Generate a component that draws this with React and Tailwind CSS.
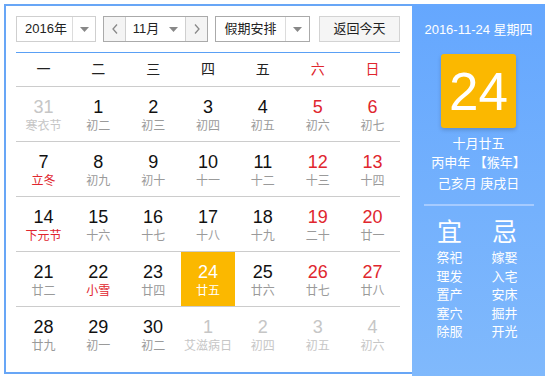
const weekdays = [
  { t: "一" },
  { t: "二" },
  { t: "三" },
  { t: "四" },
  { t: "五" },
  { t: "六", red: true },
  { t: "日", red: true },
];

// d: day, l: lunar text, o: other month, h: holiday (red lunar), w: weekend, today
const weeks = [
  [
    { d: 31, l: "寒衣节", o: true },
    { d: 1, l: "初二" },
    { d: 2, l: "初三" },
    { d: 3, l: "初四" },
    { d: 4, l: "初五" },
    { d: 5, l: "初六", w: true },
    { d: 6, l: "初七", w: true },
  ],
  [
    { d: 7, l: "立冬", h: true },
    { d: 8, l: "初九" },
    { d: 9, l: "初十" },
    { d: 10, l: "十一" },
    { d: 11, l: "十二" },
    { d: 12, l: "十三", w: true },
    { d: 13, l: "十四", w: true },
  ],
  [
    { d: 14, l: "下元节", h: true },
    { d: 15, l: "十六" },
    { d: 16, l: "十七" },
    { d: 17, l: "十八" },
    { d: 18, l: "十九" },
    { d: 19, l: "二十", w: true },
    { d: 20, l: "廿一", w: true },
  ],
  [
    { d: 21, l: "廿二" },
    { d: 22, l: "小雪", h: true },
    { d: 23, l: "廿四" },
    { d: 24, l: "廿五", today: true },
    { d: 25, l: "廿六" },
    { d: 26, l: "廿七", w: true },
    { d: 27, l: "廿八", w: true },
  ],
  [
    { d: 28, l: "廿九" },
    { d: 29, l: "初一" },
    { d: 30, l: "初二" },
    { d: 1, l: "艾滋病日", o: true },
    { d: 2, l: "初四", o: true },
    { d: 3, l: "初五", o: true },
    { d: 4, l: "初六", o: true },
  ],
];

const yi = ["祭祀", "理发", "置产", "塞穴", "除服"];
const ji = ["嫁娶", "入宅", "安床", "掘井", "开光"];

function Caret() {
  return (
    <svg width="9" height="5" viewBox="0 0 9 5">
      <path d="M0 0h9L4.5 5z" fill="#888" />
    </svg>
  );
}

function DayCell({ c }) {
  let num = "text-[#111]";
  let lunar = "text-[#9a9a9a]";
  if (c.w) num = "text-[#e0262e]";
  if (c.h) lunar = "text-[#e0262e]";
  if (c.o) {
    num = "text-[#c6c6c6]";
    lunar = "text-[#c6c6c6]";
  }
  if (c.today) {
    num = "text-white";
    lunar = "text-white";
  }
  return (
    <div className={`flex flex-col items-center pt-[10px] ${c.today ? "bg-[#fbb800]" : ""}`}>
      <span className={`text-[18px] leading-[20px] ${num}`}>{c.d}</span>
      <span className={`text-[12px] leading-[16px] mt-[1px] ${lunar}`}>{c.l}</span>
    </div>
  );
}

export default function App() {
  return (
    <div
      className="flex items-start pl-[4px] pt-[4px] bg-white w-[545px] h-[376px] overflow-hidden"
      style={{ fontFamily: '"Liberation Sans", "Noto Sans CJK SC", sans-serif' }}
    >
      {/* calendar panel */}
      <div className="w-[408px] h-[370px] border-l-2 border-t-2 border-b-2 border-[#68a6f6] pl-[10px] pr-[10px] pt-[10px]">
        {/* toolbar */}
        <div className="flex h-[26px] text-[13px] text-[#222]">
          <div className="flex w-[80px] border border-[#cfcfcf] bg-white">
            <div className="flex-1 flex items-center justify-center pl-[3px]">2016年</div>
            <div className="w-[23px] border-l border-[#dcdcdc] flex items-center justify-center">
              <Caret />
            </div>
          </div>
          <div className="flex w-[105px] ml-[7px] border border-[#aaaaaa]">
            <div className="w-[22px] bg-[#f4f4f4] border-r border-[#cfcfcf] flex items-center justify-center text-[#777]">
              <svg width="6" height="10" viewBox="0 0 6 10">
                <path d="M5 0.5L1 5l4 4.5" stroke="#888" strokeWidth="1.3" fill="none" />
              </svg>
            </div>
            <div className="flex-1 flex items-center justify-center gap-[10px] bg-white">
              <span>11月</span>
              <Caret />
            </div>
            <div className="w-[22px] bg-[#f4f4f4] border-l border-[#cfcfcf] flex items-center justify-center">
              <svg width="6" height="10" viewBox="0 0 6 10">
                <path d="M1 0.5L5 5l-4 4.5" stroke="#888" strokeWidth="1.3" fill="none" />
              </svg>
            </div>
          </div>
          <div className="flex w-[95px] ml-[7px] border border-[#aaaaaa] bg-white">
            <div className="flex-1 flex items-center justify-center">假期安排</div>
            <div className="w-[24px] border-l border-[#dcdcdc] flex items-center justify-center">
              <Caret />
            </div>
          </div>
          <div className="w-[81px] ml-[9px] border border-[#d3d3d3] bg-[#f5f5f5] flex items-center justify-center">
            返回今天
          </div>
        </div>

        {/* blue line */}
        <div className="mt-[10px] h-px bg-[#5aa0f5] w-[384px]" />

        {/* weekdays */}
        <div className="grid grid-cols-7 w-[384px] h-[34px] border-b border-[#cccccc] text-[14px]">
          {weekdays.map((w) => (
            <div key={w.t} className={`flex items-center justify-center ${w.red ? "text-[#e0262e]" : "text-[#222]"}`}>
              {w.t}
            </div>
          ))}
        </div>

        {/* days */}
        <div className="w-[384px]">
          {weeks.map((wk, i) => (
            <div
              key={i}
              className={`grid grid-cols-7 h-[55px] ${i < weeks.length - 1 ? "border-b border-[#cccccc]" : ""}`}
            >
              {wk.map((c, j) => (
                <DayCell key={j} c={c} />
              ))}
            </div>
          ))}
        </div>
      </div>

      {/* side panel */}
      <div className="w-[133px] h-[372px] bg-gradient-to-b from-[#65a7fe] to-[#80b9fc] flex flex-col items-center text-white">
        <div className="mt-[18px] text-[13px] leading-[16px]">2016-11-24 星期四</div>
        <div className="mt-[16px] w-[75px] h-[74px] rounded-[3px] bg-[#fbb800] shadow-[0_2px_4px_rgba(0,0,0,0.18)] flex items-center justify-center">
          <span className="text-[53px] leading-none font-light">24</span>
        </div>
        <div className="mt-[6px] text-[13px] leading-[19px]">十月廿五</div>
        <div className="text-[13px] leading-[19px]">丙申年 【猴年】</div>
        <div className="mt-[2px] text-[13px] leading-[19px]">己亥月 庚戌日</div>
        <div className="mt-[11px] w-[110px] h-[2px] bg-[#a6cbff]" />
        <div className="mt-[12px] flex gap-[29px] pr-[3px]">
          <div className="flex flex-col items-center">
            <span className="text-[25px] leading-[28px]">宜</span>
            <div className="mt-[3px] flex flex-col items-center text-[13px] leading-[18.5px]">
              {yi.map((t) => (
                <span key={t}>{t}</span>
              ))}
            </div>
          </div>
          <div className="flex flex-col items-center">
            <span className="text-[25px] leading-[28px]">忌</span>
            <div className="mt-[3px] flex flex-col items-center text-[13px] leading-[18.5px]">
              {ji.map((t) => (
                <span key={t}>{t}</span>
              ))}
            </div>
          </div>
        </div>
      </div>
    </div>
  );
}
